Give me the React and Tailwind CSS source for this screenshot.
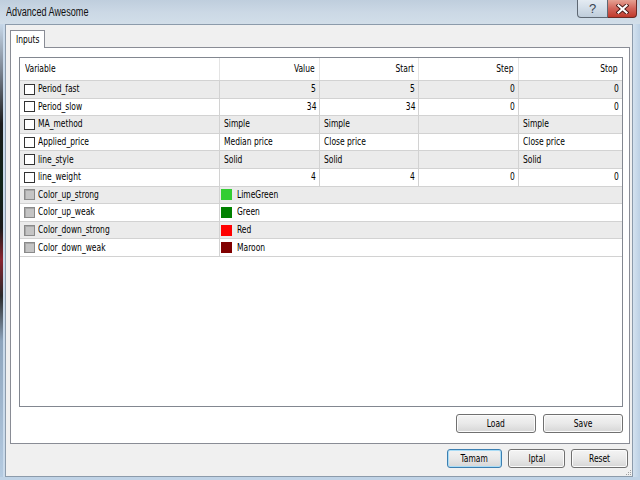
const rows = [
  { name: 'Period_fast', cells: ['5', '5', '0', '0'], num: true },
  { name: 'Period_slow', cells: ['34', '34', '0', '0'], num: true },
  { name: 'MA_method', cells: ['Simple', 'Simple', '', 'Simple'] },
  { name: 'Applied_price', cells: ['Median price', 'Close price', '', 'Close price'] },
  { name: 'line_style', cells: ['Solid', 'Solid', '', 'Solid'] },
  { name: 'line_weight', cells: ['4', '4', '0', '0'], num: true },
  { name: 'Color_up_strong', color: '#32cd32', label: 'LimeGreen' },
  { name: 'Color_up_weak', color: '#008000', label: 'Green' },
  { name: 'Color_down_strong', color: '#ff0000', label: 'Red' },
  { name: 'Color_down_weak', color: '#800000', label: 'Maroon' },
];

function L({ children }) {
  return <span className="inline-block whitespace-nowrap origin-left scale-x-[0.84]">{children}</span>;
}
function R({ children }) {
  return <span className="inline-block whitespace-nowrap origin-right scale-x-[0.84]">{children}</span>;
}
function C({ children }) {
  return <span className="inline-block whitespace-nowrap origin-center scale-x-[0.84]">{children}</span>;
}

function Check({ disabled }) {
  return disabled ? (
    <span className="w-[11px] h-[11px] shrink-0 border border-[#8a8a8a] bg-[#c4c4c4] shadow-[inset_1px_1px_0_#a8a8a8]" />
  ) : (
    <span className="w-[11px] h-[11px] shrink-0 border border-[#333333] bg-white" />
  );
}

function Btn({ children, w, primary }) {
  return (
    <div
      className={
        primary
          ? 'h-[19px] flex items-center justify-center rounded-[3px] border border-[#3c7fb1] bg-gradient-to-b from-[#f2f2f2] via-[#e8e8e8] to-[#d6d6d6] shadow-[inset_0_0_0_1px_#a9dcf6] text-[10px]'
          : 'h-[19px] flex items-center justify-center rounded-[3px] border border-[#707070] bg-gradient-to-b from-[#f4f4f4] via-[#e9e9e9] to-[#d6d6d6] shadow-[inset_0_0_0_1px_#fbfbfb] text-[10px]'
      }
      style={{ width: w }}
    >
      <C>{children}</C>
    </div>
  );
}

export default function App() {
  return (
    <div className="w-[640px] h-[480px] flex flex-col overflow-hidden bg-[#c6d7e8] text-black text-[10px] leading-none font-['DejaVu_Sans_Condensed','DejaVu_Sans',sans-serif]">
      {/* Title bar */}
      <div className="h-[24px] shrink-0 flex items-start bg-gradient-to-b from-[#bfcedd] via-[#cbd8e5] to-[#d2dee9]">
        <div className="pl-[6px] pt-[6px] text-[12px] text-[#111111] font-['Liberation_Sans',sans-serif]">
          <span className="inline-block whitespace-nowrap origin-left scale-x-[0.76]">Advanced Awesome</span>
        </div>
        <div className="ml-auto mr-[3px] flex">
          <div className="w-[31px] h-[18px] flex items-center justify-center rounded-bl-[4px] border border-[#5e6873] border-t-0 bg-gradient-to-b from-[#e4ebf2] via-[#d2dde8] to-[#bfcddb] text-[13px] text-[#3a4450] font-['Liberation_Sans',sans-serif]">
            ?
          </div>
          <div className="w-[29px] h-[18px] flex items-center justify-center rounded-br-[4px] border border-[#6b2a24] border-t-0 border-l-0 bg-gradient-to-b from-[#e5a193] via-[#d2645a] to-[#c0392b]">
            <svg width="13" height="10" viewBox="0 0 13 10">
              <path d="M2.5 1.5 L10.5 8.5 M10.5 1.5 L2.5 8.5" stroke="#4a1a16" strokeWidth="4" strokeLinecap="square" />
              <path d="M2.5 1.5 L10.5 8.5 M10.5 1.5 L2.5 8.5" stroke="#ffffff" strokeWidth="2.2" strokeLinecap="square" />
            </svg>
          </div>
        </div>
      </div>

      {/* Body */}
      <div className="flex-1 flex min-h-0">
        <div className="w-[5px] shrink-0 flex">
          <div className="w-[3px] bg-[linear-gradient(to_bottom,#c6d7e8_0%,#7d8794_10%,#1c1c1c_22%,#0f2418_35%,#1a1a1a_45%,#8a2430_52%,#2a2a2a_60%,#8da4bc_70%,#b5cbe1_100%)]" />
          <div className="flex-1 bg-[#c9daeb]" />
        </div>

        {/* Client area */}
        <div className="flex-1 flex flex-col bg-[#f0f0f0] border border-[#8c9bab] pl-[4px] pr-[2px] pt-[5px] relative">
          {/* Tab strip */}
          <div className="flex">
            <div className="relative z-10 w-[35px] h-[18px] -mb-[1px] pl-[5px] pt-[4px] bg-white border border-b-0 border-[#898c95]">
              <L>Inputs</L>
            </div>
          </div>

          {/* Tab panel */}
          <div className="h-[397px] flex flex-col bg-white border border-[#898c95] pt-[9px] pl-[8px] pr-[6px] pb-[9px]">
            {/* Table */}
            <div className="h-[350px] border border-[#828790] bg-white flex flex-col">
              <div className="h-[22px] grid grid-cols-[200px_100px_99px_100px_1fr] items-stretch">
                <div className="flex items-center pl-[5px] border-r border-[#e4e4e4]"><L>Variable</L></div>
                <div className="flex items-center justify-end pr-[4px] border-r border-[#e4e4e4]"><R>Value</R></div>
                <div className="flex items-center justify-end pr-[4px] border-r border-[#e4e4e4]"><R>Start</R></div>
                <div className="flex items-center justify-end pr-[5px] border-r border-[#e4e4e4]"><R>Step</R></div>
                <div className="flex items-center justify-end pr-[5px]"><R>Stop</R></div>
              </div>
              {rows.map((r, i) => (
                <div
                  key={r.name}
                  className={
                    'h-[17.6px] grid grid-cols-[200px_100px_99px_100px_1fr] border-t border-[#d2d2d2] ' +
                    (i % 2 === 0 ? 'bg-[#ebebeb]' : 'bg-white')
                  }
                >
                  <div className="flex items-center gap-[3px] pl-[4px] border-r border-[#d2d2d2]">
                    <Check disabled={!!r.color} />
                    <L>{r.name}</L>
                  </div>
                  {r.color ? (
                    <div className="col-span-4 flex items-center gap-[5px] pl-[1px]">
                      <span className="w-[11px] h-[11px]" style={{ backgroundColor: r.color }} />
                      <L>{r.label}</L>
                    </div>
                  ) : (
                    r.cells.map((c, j) => (
                      <div
                        key={j}
                        className={
                          'flex items-center ' +
                          (r.num ? 'justify-end pr-[3px] ' : 'pl-[4px] ') +
                          (j < 3 ? 'border-r border-[#d2d2d2]' : '')
                        }
                      >
                        {r.num ? <R>{c}</R> : <L>{c}</L>}
                      </div>
                    ))
                  )}
                </div>
              ))}
              <div className="border-t border-[#d2d2d2]" />
            </div>

            <div className="mt-[7px] flex justify-end gap-[7px]">
              <Btn w={80}>Load</Btn>
              <Btn w={80}>Save</Btn>
            </div>
          </div>

          {/* Dialog buttons */}
          <div className="mt-[5px] flex justify-end gap-[6px] pr-[2px]">
            <Btn w={55} primary>Tamam</Btn>
            <Btn w={57}>Iptal</Btn>
            <Btn w={57}>Reset</Btn>
          </div>

          {/* Resize grip */}
          <div className="absolute right-[1px] bottom-[1px] grid grid-cols-3 gap-[1px]">
            <span className="w-[1px] h-[1px]" />
            <span className="w-[1px] h-[1px]" />
            <span className="w-[1px] h-[1px] bg-[#a0a0a0]" />
            <span className="w-[1px] h-[1px]" />
            <span className="w-[1px] h-[1px] bg-[#a0a0a0]" />
            <span className="w-[1px] h-[1px] bg-[#a0a0a0]" />
            <span className="w-[1px] h-[1px] bg-[#a0a0a0]" />
            <span className="w-[1px] h-[1px] bg-[#a0a0a0]" />
            <span className="w-[1px] h-[1px] bg-[#a0a0a0]" />
          </div>
        </div>

        <div className="w-[7px] shrink-0 bg-gradient-to-r from-[#d4e2ef] to-[#bcd0e4]" />
      </div>
      <div className="h-[3px] shrink-0 bg-[#c0d3e6]" />
    </div>
  );
}
